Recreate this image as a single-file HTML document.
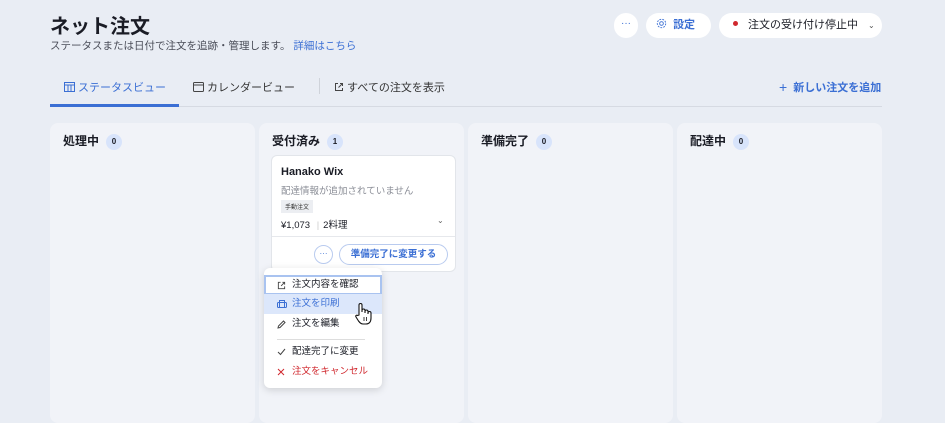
<!DOCTYPE html>
<html><head><meta charset="utf-8"><style>
*{box-sizing:border-box;margin:0;padding:0}
body{width:945px;height:404px;background:#e9edf4;font-family:"Liberation Sans","Noto Sans CJK JP",sans-serif;color:#1a1c25;position:relative;overflow:hidden}
.a{position:absolute}
.blue{color:#3b6fd4}
.col{position:absolute;top:123px;height:300px;width:205px;background:#f1f3f8;border-radius:8px}
.col .h{position:absolute;left:13px;top:9px;font-size:12px;font-weight:bold}
.badge{display:inline-block;width:16px;height:16px;border-radius:8px;background:#d8e4fb;font-size:8px;text-align:center;line-height:16px;margin-left:7px;font-weight:bold;vertical-align:1px}
.pill{position:absolute;background:#fff;border-radius:13px;height:25px;top:13px;font-size:11px;line-height:25px}
.mi{position:absolute;left:0;width:118px;height:20px;font-size:9.5px;line-height:20px;padding-left:28px}
.mi svg{position:absolute;left:13px;top:6px}
</style></head><body>
<div class="a" style="left:50px;top:10px;font-size:20px;font-weight:bold">ネット注文</div>
<div class="a" style="left:50px;top:38px;font-size:10.5px;color:#4a4d58">ステータスまたは日付で注文を追跡・管理します。 <span class="blue">詳細はこちら</span></div>

<div class="pill" style="left:614px;width:24px;text-align:center;color:#3b6fd4;font-size:10px;line-height:22px">···</div>
<div class="pill" style="left:646px;width:65px;color:#3b6fd4;padding-left:10px"><svg width="11" height="11" viewBox="0 0 12 12" style="vertical-align:-1px"><circle cx="6" cy="6" r="2" fill="none" stroke="#3b6fd4"/><circle cx="6" cy="6" r="4.6" fill="none" stroke="#3b6fd4" stroke-dasharray="2 1.2"/></svg> <b style="margin-left:3px">設定</b></div>
<div class="pill" style="left:719px;width:163px;padding-left:14px"><span style="display:inline-block;width:5px;height:5px;border-radius:3px;background:#d0282e;vertical-align:2px"></span><span style="margin-left:10px">注文の受け付け停止中</span><span style="margin-left:10px;font-size:8px;color:#555">⌄</span></div>

<div class="a" style="left:64px;top:79px;font-size:11px;color:#3b6fd4"><svg width="11" height="10" viewBox="0 0 11 10" style="vertical-align:-1px"><rect x=".5" y=".5" width="10" height="9" fill="none" stroke="#3b6fd4"/><path d="M.5 3h10M4 3v7M7 3v7" stroke="#3b6fd4"/></svg> ステータスビュー</div>
<div class="a" style="left:193px;top:79px;font-size:11px;color:#333"><svg width="11" height="10" viewBox="0 0 11 10" style="vertical-align:-1px"><rect x=".5" y=".5" width="10" height="9" rx="1" fill="none" stroke="#444"/><path d="M.5 3h10" stroke="#444"/></svg> カレンダービュー</div>
<div class="a" style="left:319px;top:78px;width:1px;height:16px;background:#cfd3da"></div>
<div class="a" style="left:334px;top:79px;font-size:11px;color:#333"><svg width="10" height="10" viewBox="0 0 10 10" style="vertical-align:-1px"><path d="M4 1.5H1.5v7h7V6M6 1.5h2.5V4M8.5 1.5L4.5 5.5" fill="none" stroke="#444"/></svg> すべての注文を表示</div>
<div class="a blue" style="left:779px;top:79px;font-size:11px;font-weight:bold"><span style="font-weight:normal;font-size:14px;vertical-align:-1px">+</span>&nbsp; 新しい注文を追加</div>
<div class="a" style="left:50px;top:106px;width:832px;height:1px;background:#d6dae2"></div>
<div class="a" style="left:50px;top:104px;width:129px;height:3px;background:#3b6fd4"></div>

<div class="col" style="left:50px"><div class="h">処理中<span class="badge">0</span></div></div>
<div class="col" style="left:259px"><div class="h">受付済み<span class="badge">1</span></div></div>
<div class="col" style="left:468px"><div class="h">準備完了<span class="badge">0</span></div></div>
<div class="col" style="left:677px"><div class="h">配達中<span class="badge">0</span></div></div>

<div class="a" style="left:271px;top:155px;width:185px;height:117px;background:#fff;border:1px solid #e2e5ea;border-radius:6px">
 <div class="a" style="left:9px;top:10px;font-size:11px;font-weight:bold">Hanako Wix</div>
 <div class="a" style="left:9px;top:27px;font-size:9.5px;color:#8a8d96">配達情報が追加されていません</div>
 <div class="a" style="left:9px;top:44px;font-size:6px;background:#eceef2;padding:2px 4px;color:#333">手動注文</div>
 <div class="a" style="left:9px;top:61px;font-size:9.5px">¥1,073 <span style="color:#ccc;margin:0 4px">|</span>2料理</div>
 <div class="a" style="left:165px;top:60px;font-size:8px;color:#666">⌄</div>
 <div class="a" style="left:0;top:80px;width:183px;height:1px;background:#e6e8ec"></div>
 <div class="a" style="left:42px;top:89px;width:19px;height:19px;border:1px solid #b9cbef;border-radius:10px;text-align:center;font-size:8px;line-height:15px;color:#3b6fd4">···</div>
 <div class="a" style="left:67px;top:88px;width:109px;height:21px;border:1px solid #b9cbef;border-radius:11px;text-align:center;font-size:9.5px;line-height:19px;color:#3b6fd4;font-weight:bold">準備完了に変更する</div>
</div>

<div class="a" style="left:264px;top:268px;width:118px;height:120px;background:#fff;border-radius:6px;box-shadow:0 2px 8px rgba(0,0,0,.15)">
 <div class="mi" style="top:7px;border:2px solid #a9c3f0;padding-left:26px;line-height:16px"><svg width="9" height="9" viewBox="0 0 10 10" style="left:11px;top:4px"><path d="M4 1.5H1.5v7h7V6M6 1.5h2.5V4M8.5 1.5L4.5 5.5" fill="none" stroke="#444"/></svg>注文内容を確認</div>
 <div class="mi" style="top:26px;background:#dce7fb;color:#3b6fd4"><svg width="10" height="9" viewBox="0 0 10 9"><rect x=".5" y="2.5" width="9" height="5" rx="1" fill="none" stroke="#3b6fd4"/><rect x="2.5" y=".5" width="5" height="7" fill="none" stroke="#3b6fd4"/></svg>注文を印刷</div>
 <div class="mi" style="top:46px"><svg width="9" height="9" viewBox="0 0 9 9"><path d="M1 8l.5-2L6.5 1 8 2.5 3 7.5z" fill="none" stroke="#444"/></svg>注文を編集</div>
 <div class="a" style="left:13px;top:71px;width:88px;height:1px;background:#ddd"></div>
 <div class="mi" style="top:74px"><svg width="9" height="8" viewBox="0 0 9 8"><path d="M1 4l2.5 2.5L8 1" fill="none" stroke="#444"/></svg>配達完了に変更</div>
 <div class="mi" style="top:94px;color:#d0282e"><svg width="8" height="8" viewBox="0 0 8 8"><path d="M1 1l6 6M7 1L1 7" stroke="#d0282e"/></svg>注文をキャンセル</div>
</div>
<svg class="a" style="left:354px;top:302px" width="20" height="24" viewBox="0 0 20 24"><path d="M5 13V3a1.5 1.5 0 0 1 3 0v7V8.5a1.5 1.5 0 0 1 3 0V11V9.5a1.5 1.5 0 0 1 3 0V12v-1a1.5 1.5 0 0 1 3 0v5c0 4-2 6-5 6H9c-2 0-3-1-4.5-3L2 15c-.8-1.2.6-2.4 1.6-1.5z" fill="#fff" stroke="#111" stroke-width="1.1"/><path d="M10 15v4M12.5 15v4" stroke="#111" stroke-width=".8"/></svg>
</body></html>
